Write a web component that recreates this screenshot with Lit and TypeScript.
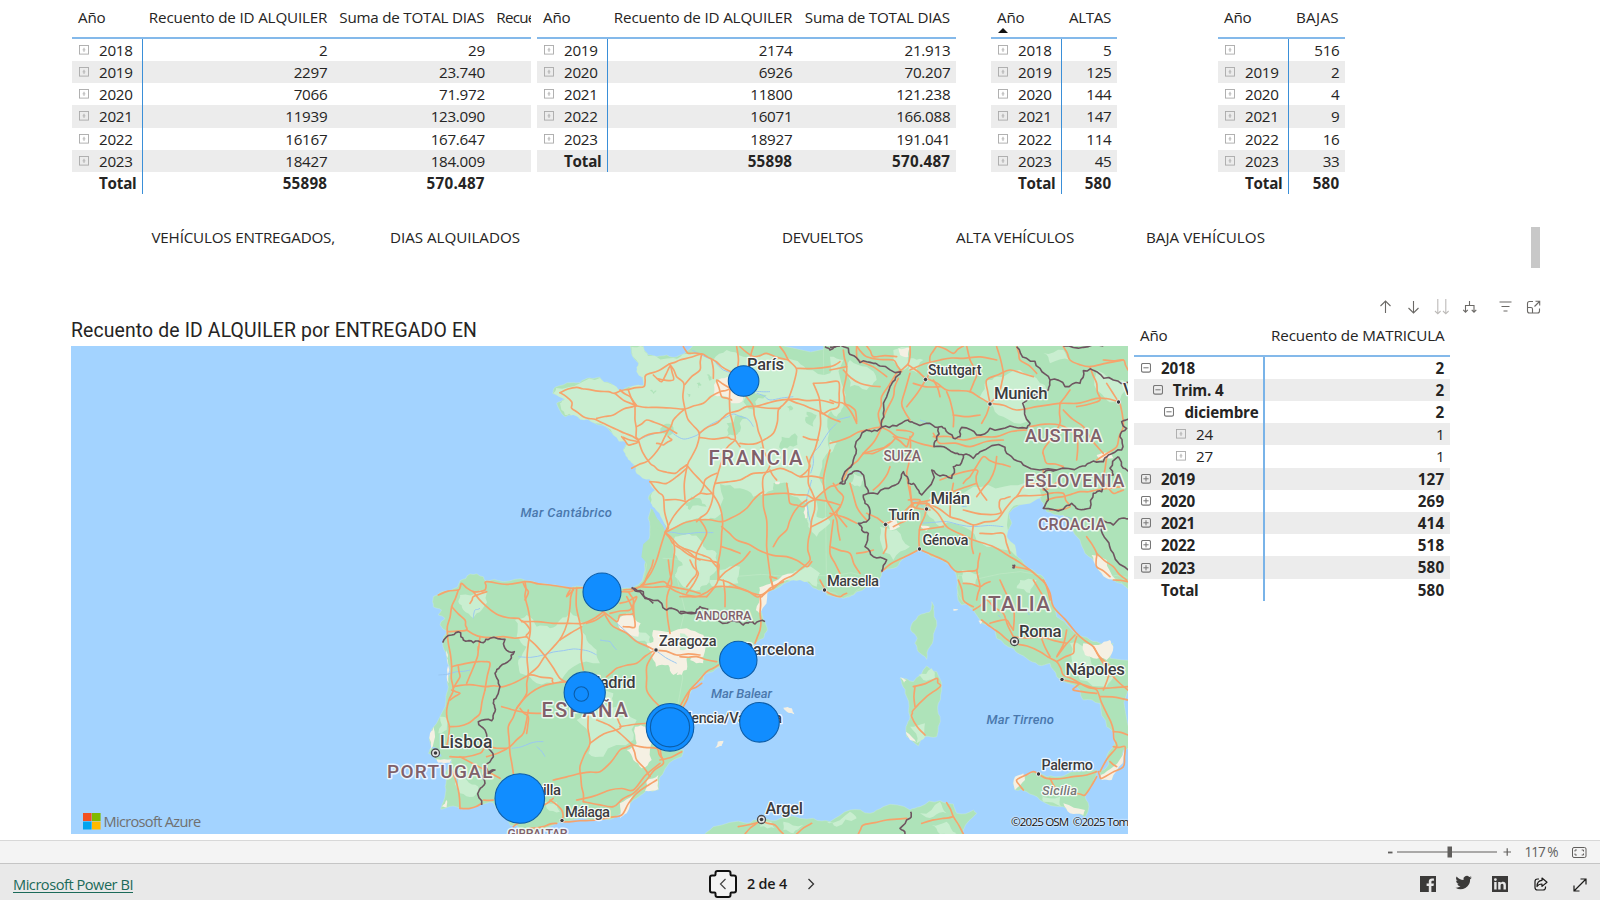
import { LitElement, html, svg, css } from "lit";
import { customElement, property } from "lit/decorators.js";

/* ---------- text set to a given width ---------- */
@customElement("fit-text")
class FitText extends LitElement {
  static styles = css`
    :host { display: inline-block; white-space: nowrap; }
  `;
  @property({ type: Number }) w = 0;
  firstUpdated() {
    const n = (this.textContent || "").trim().length;
    const natural = this.getBoundingClientRect().width;
    if (this.w && n > 1) this.style.letterSpacing = (this.w - natural) / n + "px";
  }
  render() {
    return html`<slot></slot>`;
  }
}

/* ---------- matrix visual ---------- */
interface Row { label: string; vals: string[]; bold?: boolean; level?: number; icon?: string; }
interface Col { title: string; w: number; tw?: number; }

@customElement("matrix-table")
class MatrixTable extends LitElement {
  static styles = css`
    :host { display: block; font: 15.2px/22px "Open Sans", "Noto Sans", sans-serif; color: #252423; overflow: hidden; }
    .row { display: grid; height: 22.15px; }
    .soft .row { height: 22.22px; }
    .row.alt { background: #ececec; }
    .head { height: 31px; padding-top: 6px; border-bottom: 2px solid #84b9ea; }
    .head > div { padding: 0 6px; text-align: right; white-space: nowrap; }
    .head > .first { text-align: left; position: relative; }
    .head > .cut { text-align: left; padding-right: 0; overflow: hidden; }
    .tri { position: absolute; left: 6.500px; top: 22px; width: 0; height: 0; border: 5px solid transparent; border-top: 0; border-bottom-color: #111; }
    .cell { text-align: right; padding-right: 5.5px; letter-spacing: -0.28px; }
    .name { display: flex; align-items: center; padding-left: 7px; letter-spacing: -0.28px; border-right: 1.5px solid #3a8fd8; gap: 10px; white-space: nowrap; }
    .soft .name { border-right: 2px solid #79b3e8; }
    .bold { font-weight: 700; }
    .bold .cell { letter-spacing: 0.25px; }
    .bold .name { letter-spacing: -0.22px; }
    svg { flex: none; width: 10px; height: 10px; }
  `;
  @property({ attribute: false }) cols: Col[] = [];
  @property({ attribute: false }) rows: Row[] = [];
  @property({ type: Boolean }) sorted = false;
  @property({ type: Boolean }) soft = false;

  icon(kind: string | undefined, bold?: boolean) {
    const c = bold ? "#777" : "#a9a9a9";
    return html`<svg viewBox="0 0 10 10" fill="none" stroke=${c}>
      ${kind === "none" ? "" : svg`<rect x=".5" y=".5" width="9" height="8.6" rx=${bold ? 1.5 : 0} stroke-width=${bold ? 1.1 : 0.9} />
      ${kind === "minus" || bold ? svg`<path d="M2.4 4.8H7.6" />` : svg`<path d="M3.4 4.8H6.6" stroke-opacity=".5" />`}
      ${kind === "minus" ? "" : svg`<path d=${bold ? "M5 2.2V7.4" : "M5 2.8V6.8"} />`}`}
    </svg>`;
  }

  render() {
    const g = "grid-template-columns:" + this.cols.map((c) => c.w + "px").join(" ");
    return html`
      <div class="row head" style=${g}>
        ${this.cols.map((c, i) => html`<div class=${i === 0 ? "first" : i === 3 ? "cut" : ""}><fit-text .w=${c.tw || 0}>${c.title}</fit-text>${i === 0 && this.sorted ? html`<span class="tri"></span>` : ""}</div>`)}
      </div>
      <div class=${this.soft ? "soft" : ""}>
        ${this.rows.map((r, i) => html`
          <div class="row ${i % 2 ? "alt" : ""} ${r.bold ? "bold" : ""}" style=${g}>
            <div class="name" style=${"padding-left:" + (7 + (r.level || 0) * 11.7) + "px"}>${this.icon(r.icon, r.bold)}<span>${r.label}</span></div>
            ${r.vals.map((v) => html`<div class="cell">${v}</div>`)}
          </div>`)}
      </div>`;
  }
}

const plain = (data: string[][]): Row[] =>
  data.map(([label, ...vals]) => (label === "Total" ? { label, vals, bold: true, icon: "none" } : { label, vals }));

const AN = { title: "Año", w: 70.8, tw: 27.5 };
const RID = { title: "Recuento de ID ALQUILER", w: 190, tw: 178.5 };
const STD = { title: "Suma de TOTAL DIAS", w: 157.5, tw: 145 };

const T1 = plain([["2018", "2", "29"], ["2019", "2297", "23.740"], ["2020", "7066", "71.972"], ["2021", "11939", "123.090"], ["2022", "16167", "167.647"], ["2023", "18427", "184.009"], ["Total", "55898", "570.487"]]);
const T2 = plain([["2019", "2174", "21.913"], ["2020", "6926", "70.207"], ["2021", "11800", "121.238"], ["2022", "16071", "166.088"], ["2023", "18927", "191.041"], ["Total", "55898", "570.487"]]);
const T3 = plain([["2018", "5"], ["2019", "125"], ["2020", "144"], ["2021", "147"], ["2022", "114"], ["2023", "45"], ["Total", "580"]]);
const T4 = plain([["", "516"], ["2019", "2"], ["2020", "4"], ["2021", "9"], ["2022", "16"], ["2023", "33"], ["Total", "580"]]);
const T5: Row[] = [
  { label: "2018", vals: ["2"], bold: true, icon: "minus" },
  { label: "Trim. 4", vals: ["2"], bold: true, icon: "minus", level: 1 },
  { label: "diciembre", vals: ["2"], bold: true, icon: "minus", level: 2 },
  { label: "24", vals: ["1"], level: 3 },
  { label: "27", vals: ["1"], level: 3 },
  { label: "2019", vals: ["127"], bold: true },
  { label: "2020", vals: ["269"], bold: true },
  { label: "2021", vals: ["414"], bold: true },
  { label: "2022", vals: ["518"], bold: true },
  { label: "2023", vals: ["580"], bold: true },
  { label: "Total", vals: ["580"], bold: true, icon: "none" },
];

/* ---------- map geometry ---------- */
type P = [number, number];
const pts = (s: string): P[] => s.trim().split(/\s+/).map((p) => p.split(",").map(Number) as P);

const noise = (x: number, y: number, k: number) => {
  const v = Math.sin(x * 12.9898 + y * 78.233 + k * 37.7) * 43758.5453;
  return (v - Math.floor(v)) * 2 - 1;
};
// midpoint displacement gives coasts and borders their ragged line
const rough = (p: P[], amp: number, depth: number): P[] => {
  if (!depth) return p;
  const out: P[] = [p[0]];
  for (let i = 1; i < p.length; i++) {
    const [a, b] = [p[i - 1], p[i]];
    const dx = b[0] - a[0], dy = b[1] - a[1];
    const len = Math.hypot(dx, dy);
    const n = len < 6 || len > 320 ? 0 : noise(a[0], b[1], depth) * amp;
    out.push([(a[0] + b[0]) / 2 - dy * n, (a[1] + b[1]) / 2 + dx * n], b);
  }
  return rough(out, amp, depth - 1);
};
const line = (p: P[]) => "M" + p.map((q) => q[0].toFixed(1) + " " + q[1].toFixed(1)).join("L");
const shape = (s: string, amp = 0.13) => { const p = pts(s); return line(rough([...p, p[0]], amp, 2)) + "Z"; };
const border = (s: string) => line(rough(pts(s), 0.2, 2));
const curve = (s: string) => {
  const p = rough(pts(s), 0.07, 1);
  let d = `M${p[0][0]} ${p[0][1]}`;
  for (let i = 0; i < p.length - 1; i++) {
    const a = p[i - 1] || p[i], b = p[i], c = p[i + 1], e = p[i + 2] || c;
    d += `C${b[0] + (c[0] - a[0]) / 6} ${b[1] + (c[1] - a[1]) / 6} ${c[0] - (e[0] - b[0]) / 6} ${c[1] - (e[1] - b[1]) / 6} ${c[0]} ${c[1]}`;
  }
  return d;
};

interface Tile { x: number; y: number; land: string[]; sea?: string[]; light: string[]; dark?: string[]; cream: string[]; rivers: string[]; roads: string[]; borders: string[]; }

const TILES: Tile[] = [
  {
    // France
    x: 540, y: 340,
    land: [
      "272,10 310,10 312,30 324,45 360,48 400,52 435,40 460,10 930,10 930,700 895,762 850,748 820,744 800,724 770,714 740,727 700,744 680,762 660,780 660,830 200,830 240,752 300,736 308,720 318,660 326,610 330,560 332,510 325,475 345,450 330,418 290,400 280,372 262,352 250,330 260,310 250,292 220,285 200,262 165,250 120,238 105,215 95,225 75,230 50,190 75,178 62,165 38,160 45,142 95,128 120,128 150,114 180,112 190,128 212,130 228,150 245,152 265,140 300,140 312,135 290,95 296,70 274,40",
    ],
    sea: ["328,478 338,500 358,520 376,558 384,574 378,574 362,550 344,520 330,502"],
    light: [
      "274,20 310,20 324,48 400,54 440,42 520,60 560,30 610,50 700,50 760,60 800,90 870,100 880,190 862,260 870,330 840,400 850,450 825,475 830,540 800,540 800,490 745,460 745,430 700,430 700,450 640,470 600,445 540,432 545,520 500,540 460,540 385,575 376,555 345,510 332,490 345,450 330,418 290,400 280,372 262,352 250,330 262,310 220,285 165,250 120,238 100,225 75,225 60,190 75,178 40,160 48,144 120,130 180,114 212,132 245,152 312,138 290,95 296,70",
      "405,590 445,580 485,605 500,630 530,640 530,690 500,735 450,742 405,705 430,680 400,640",
      "810,530 860,530 870,550 830,590 805,560",
      "540,690 600,680 595,730 550,745",
      "740,720 800,680 840,700 830,740 780,720",
    ],
    dark: [
      "560,250 620,235 600,275 560,290", "800,215 830,225 820,260 795,240", "725,290 765,280 760,320 725,330", "640,150 680,165 650,200 610,185", "435,490 480,475 500,500 450,510",
      "370,255 400,262 380,290 362,280", "330,150 350,152 340,162", "500,105 515,110 508,122", "600,90 625,98 610,110", "660,320 690,330 670,345", "570,260 600,256 590,285 572,280",
      "440,160 452,165 444,172", "470,130 485,135 475,145", "740,200 760,205 748,215", "330,545 370,560 360,640 330,680",
    ],
    cream: ["522,135 545,115 575,110 570,135 610,165 605,185 575,190 560,170 522,165", "658,742 700,725 760,700 745,718 690,750 660,775", "705,425 720,425 718,432 706,432", "795,500 802,500 802,535 795,535"],
    rivers: ["295,300 330,285 385,270 430,297 480,280 540,240 580,222 620,235 640,260", "455,30 485,45 520,60 550,90 600,100 640,150 690,155", "375,575 430,582 520,578", "890,250 850,300 820,340 812,400", "815,560 800,480 815,420", "650,160 690,180 760,170"],
    roads: [
      "60,158 110,142 145,148 205,155 225,160 265,148 312,140 318,105 388,72 420,60 485,42 510,55 545,80 590,100",
      "60,158 95,185 95,205 130,230 165,238 215,262 255,280 295,300", "225,160 285,197 220,225 170,235", "285,197 285,240 288,290 295,300 330,370 355,390 405,400 440,375",
      "285,197 350,202 435,207 490,190 540,155 575,145", "435,207 400,240 385,270 340,280 295,300", "435,207 445,240 478,280 455,350 440,385 435,480",
      "478,280 530,250 565,220 620,200 680,190 745,178 800,182 880,190", "388,72 410,110 432,133 435,207", "485,42 480,90 435,133", "285,197 265,150",
      "478,292 560,292 585,300 600,320", "570,220 580,260 585,300 550,340 540,380 525,430 520,465", "440,375 480,420 520,465 545,520 545,580 540,640 535,718 500,770",
      "275,385 320,365 360,320 385,270", "330,425 380,430 440,385", "330,425 345,445 370,470 385,560 375,578", "375,578 440,485 480,460 520,460",
      "375,578 430,550 470,540 545,545 600,520 640,480 670,455", "375,578 400,600 430,625 470,655 535,670 535,718", "375,578 400,612 440,640 480,660", "375,578 350,660 310,730 300,740 250,750",
      "535,718 580,680 630,635", "545,560 590,600 660,632 740,650 800,680 815,665", "525,430 600,420 640,400 720,385 780,410 850,415",
      "670,455 680,540 680,620 690,700 700,745", "670,465 740,460 800,465 825,478", "825,478 815,540 805,600 810,660 760,705 700,745 665,770",
      "745,178 715,210 700,280 650,310 600,310", "745,178 770,90 745,60 720,20", "745,178 790,195 840,215 900,245", "840,215 835,290 810,360 805,430 825,478",
      "825,478 900,495", "825,478 870,440 900,430", "820,130 895,125 895,200 845,220 820,130", "770,85 870,80 900,65", "610,160 640,200 650,250 665,300 690,370 670,410 670,455",
      "535,718 590,740 650,770 665,770", "740,430 750,490 790,500 825,478", "300,740 380,740 440,765 500,770", "400,600 400,660 380,740", "375,480 440,485",
      "745,60 680,40 640,50 600,20", "485,42 445,40 430,20", "515,60 520,115", "340,105 365,125 390,80 400,120 350,115", "245,290 265,315 295,305 250,292", "700,620 740,570 760,520 800,480",
      "570,145 570,220", "570,145 530,120 545,170 575,180", "590,100 590,20", "640,20 630,60 620,110", "290,260 320,240 365,255 410,280", "240,150 270,170 290,197", "780,410 810,380 800,350",
      "480,540 500,580 470,640 470,700 440,740", "545,620 600,640", "870,330 850,420 860,480 890,540 900,600", "815,560 870,530 900,500", "880,540 870,640 900,700", "385,290 395,300 370,315 350,310",
      "790,290 835,300", "690,390 710,420", "700,745 690,710 710,715", "480,460 495,420 530,400", "650,200 720,205", "430,625 470,640 510,655 530,680", "520,465 500,520 470,545",
    ],
    borders: ["275,742 300,755 310,768 340,790", "855,20 870,30 900,18"],
  },
  {
    // Alps, northern Italy and the Adriatic
    x: 830, y: 340,
    land: ["-20,10 960,10 960,745 894,733 850,720 800,680 765,640 750,600 722,560 700,525 665,520 650,515 640,490 632,475 600,475 590,490 560,500 535,520 545,550 530,585 545,620 575,660 620,700 640,740 665,795 395,795 385,730 375,695 350,670 320,655 290,640 270,628 245,640 215,660 190,685 155,695 140,735 80,755 60,770 -10,765"],
    light: [
      "500,110 570,90 630,130 655,150 610,170 580,200 590,245 520,230 480,190 450,170 470,120", "60,60 110,80 140,120 110,150 60,140 45,90", "0,50 40,60 40,200 20,230 0,210",
      "300,470 430,440 520,440 600,410 635,470 560,495 535,520 530,590 560,650 470,620 420,570 330,560 290,520", "800,90 880,120 870,180 830,180 800,150", "190,30 240,20 235,80 210,90", "240,55 280,60 260,100 235,90",
      "70,400 100,410 90,440 60,430", "150,560 200,570 240,620 190,660 150,600", "395,690 450,700 440,740 400,730", "640,40 700,30 720,60 660,70", "0,300 20,310 0,340",
    ],
    cream: ["205,25 240,25 235,50 210,45", "800,345 840,335 850,355 810,362", "170,545 200,540 210,560 180,570", "785,645 830,660 858,720 830,715 800,680", "270,555 300,560 290,572"],
    rivers: ["50,405 75,393 98,400", "705,530 730,540 745,560", "20,240 60,230", "245,480 280,500", "270,550 350,545 430,560 520,560", "270,240 300,255", "395,500 410,500"],
    roads: [
      "40,30 50,80 40,150 45,190 75,210 80,245", "215,95 190,60 110,50 80,18", "240,18 235,70 200,100 155,170 145,220 155,262", "205,115 190,170 150,260",
      "235,75 290,115 300,50 320,18", "240,90 330,60 400,55 500,60", "290,115 350,150 420,155 480,190", "420,155 440,100 410,18", "480,190 510,150 520,100 500,20",
      "480,190 560,210 690,190 800,175 865,185", "480,190 455,250", "480,190 470,120 540,90 610,110", "240,100 215,190 240,240", "350,155 365,200 370,260", "290,115 230,200",
      "370,225 450,225", "155,262 100,340 60,380 40,420", "155,262 200,290 240,300 310,320", "100,340 130,340 180,310", "0,310 60,290 110,270 155,262", "240,290 240,340 230,400 240,460 245,490",
      "310,290 400,300 500,290 590,270", "540,380 500,370 460,350 420,410 400,430", "245,490 330,470 440,430", "290,490 360,530 430,555 500,540 560,470 640,465", "290,490 250,490 170,550 110,520",
      "170,550 170,620 160,640", "290,490 270,560 268,628", "290,490 350,560 430,600 540,650 600,690 645,730 660,780", "268,570 340,560", "430,555 425,600 430,640", "268,628 350,665 380,695 440,690 450,640",
      "155,695 215,655 268,628", "400,510 510,520 510,480 540,470", "650,480 700,470 750,455 800,450 880,440", "690,190 690,250 640,330 650,370 700,380", "870,190 880,260 860,320 800,360",
      "700,20 720,60 780,80 880,60", "640,390 640,450 690,420", "640,465 700,460 720,500 660,510", "60,430 80,500 110,540", "0,620 60,640 90,700", "0,180 40,190 80,250", "80,18 85,60 170,110",
      "40,90 90,130 150,140", "320,18 370,40 400,18", "560,20 570,60 620,100", "250,130 330,140", "200,290 170,320 100,340", "190,290 230,320 250,280 200,270", "310,280 330,310 420,320 520,300", "330,420 440,390 440,430 470,480",
      "700,210 760,260 820,340", "600,260 690,255 740,290 740,360", "370,430 360,530", "450,580 520,580 540,640", "240,440 250,500 300,510", "235,480 270,480 260,500", "770,590 800,640 800,680 840,710", "800,640 850,680 890,720",
      "10,430 40,470 20,520 50,560", "780,80 800,130 810,180 740,200", "820,60 880,60 894,90", "830,350 820,420 850,460 880,450", "440,690 450,740 440,780", "0,520 80,550", "130,630 80,640", "720,150 690,190", "865,185 830,130",
      "0,90 50,80", "110,18 130,50 200,50", "310,120 330,170", "560,470 580,440 640,430", "250,490 230,540 190,560", "550,680 600,690", "180,380 160,420 130,450", "500,350 480,420 440,470",
    ],
    borders: [
      "0,22 55,25 65,45 90,68 130,70 150,78 212,95 195,120 180,140 165,180 160,220 155,262",
      "155,262 125,275 110,270 75,320 70,360 45,395 38,425 30,430 45,430 55,405 75,393 95,400 105,430 115,460 100,465 105,490 120,520 115,540 85,550 95,570 115,580 105,620 130,650 170,660 155,695",
      "155,262 200,258 235,240 250,248 290,250 325,262 320,300 312,320 350,325 375,340 400,345 390,375 370,380 365,415 330,408 305,390 275,465 265,450 250,430 235,430 220,395 205,430 165,445 115,460",
      "325,262 345,265 370,295 390,290 395,262 440,285 480,265 540,258 590,265 600,250 578,190 620,165 655,150 660,120 630,85 590,55 560,20",
      "660,120 705,140 750,130 760,92 800,95 850,120 900,125", "400,345 430,355 450,335 525,322 545,350 580,375 680,390 750,380 780,368 820,365 835,345 875,330 870,290 890,265 875,245 900,240",
      "680,390 640,400 655,480 640,505 700,508 725,490 745,508 780,505 790,460 815,455 810,420 850,405 840,385 865,350", "900,540 875,535 850,555 815,535 815,560 830,600 850,640 900,694", "700,18 760,22 820,18", "865,350 880,385 900,395", "547,676 554,676 552,684 547,682",
    ],
  },
  {
    // Iberia
    x: 370, y: 560,
    land: ["838,-10 822,50 805,75 780,85 740,88 700,90 620,78 600,85 540,75 470,62 400,65 345,62 340,50 300,42 270,62 262,82 215,95 190,110 190,140 215,150 205,165 225,175 210,195 230,215 218,248 230,290 240,330 235,380 228,420 200,490 180,530 185,560 175,580 200,600 245,602 235,625 225,650 228,690 222,720 212,748 250,738 300,745 330,735 370,728 400,765 420,795 445,800 450,830 485,830 510,808 560,790 600,782 680,780 730,775 755,760 790,720 830,690 865,690 870,650 890,620 935,590 940,570 910,560 925,480 940,440 960,400 1000,360 1000,-10"],
    light: [
      "270,105 330,90 350,100 335,150 310,175 280,150 265,125", "435,180 470,165 500,200 540,205 570,180 600,155 640,190 650,240 680,270 690,310 610,320 560,370 500,370 450,340 445,300 470,260 440,230",
      "620,480 740,440 740,470 800,480 790,540 700,590 655,580 660,540", "255,640 290,660 325,680 310,710 270,700", "520,725 560,725 570,755 530,745", "925,20 990,0 990,90 940,80 915,50", "690,395 730,400 730,430 700,430", "780,210 840,230 850,265 790,240", "210,470 235,480 230,510 205,520",
    ],
    cream: [
      "740,180 780,160 812,190 805,230 760,215", "850,210 950,205 1000,225 1000,290 950,290 950,330 910,345 895,315 858,320 845,275 830,250 850,245", "795,500 830,500 850,540 845,600 815,625 790,600 770,570 800,550", "830,660 865,645 865,688 825,692",
      "750,730 790,705 770,760 750,775", "200,598 245,598 240,608 205,608", "228,270 238,330 236,370 231,330", "180,520 190,500 188,560 180,575", "215,740 230,720 230,742",
    ],
    sea: ["185,562 205,568 215,590 200,588"],
    rivers: ["445,290 520,285 580,272 640,270 680,285", "425,565 480,550 520,545", "690,240 720,245 740,270", "740,190 790,235 855,270 920,310", "310,175 315,150 330,145", "240,620 260,650 262,690", "205,345 260,335 300,330", "500,560 525,590"],
    roads: [
      "205,105 265,90 275,70 310,95 345,90 350,65 470,65 540,75 610,85 700,90 780,95 820,75 835,40 850,0", "265,90 245,140 232,200 235,250 245,320 250,390 230,450 238,500 230,560",
      "310,95 350,140 385,165 445,175 460,185 480,210 470,230 525,288 570,355 620,380", "245,140 285,180 290,210 235,215", "290,210 330,230 400,230 470,230", "325,260 315,310 290,370", "245,320 325,305 360,310 345,390",
      "250,380 345,380 400,380 480,345 545,355 550,370", "345,390 330,460 295,490 238,500", "465,65 465,110 480,180 475,250 475,340 470,400 440,445 415,500 420,580 430,640", "610,85 600,140 575,230 525,288 475,345",
      "455,185 550,190 640,190 700,155", "620,85 630,190 635,260 640,330", "700,155 740,185 750,165 790,160 770,110", "635,200 570,240", "640,370 550,370 480,400 440,445", "395,440 430,450 520,460", "475,450 460,520 420,560 350,590",
      "700,155 730,200 800,245 855,270 920,285 990,285", "855,270 800,310 740,325 710,350", "855,275 830,320 830,390 870,440", "240,590 330,580 350,560 410,565", "655,460 660,550 630,620 635,680 640,725", "680,480 750,520 790,555 860,565 880,600",
      "750,500 830,490", "660,550 750,505 740,470", "630,640 690,635 750,570 785,555", "550,660 630,640", "785,555 800,600 840,650", "870,600 935,575", "870,560 880,610 830,660 790,700 730,740 640,725", "340,720 370,720",
      "270,745 265,690 240,620", "270,745 300,745 335,730", "540,720 575,750 580,785 680,780 755,765 800,700 860,660", "620,720 720,690 790,690 870,610", "430,800 445,790", "270,590 390,655", "895,0 905,70 890,120 900,220",
      "820,75 880,65 905,80 990,100", "995,370 960,390 940,440", "350,95 310,110 300,130", "460,70 475,95 465,120", "775,95 790,120 795,200 760,200", "720,160 780,150 800,110 750,130", "450,445 475,470 470,520", "510,740 550,715", "240,420 270,400 245,390",
      "610,90 590,110 600,90", "250,385 270,350 265,320", "560,790 520,800 480,805", "960,0 985,40 950,100", "330,230 325,270", "650,190 700,165",
    ],
    borders: [
      "785,85 820,95 825,115 875,130 890,150 920,150 940,160 990,155", "218,248 245,225 272,218 280,240 310,248 340,248 360,235 405,238 405,265 433,275 420,300 390,320 375,340 385,370 380,410 370,430 375,455 365,482 325,485 345,510 350,560 370,590 345,620 355,640 375,630 360,640 345,640 345,670 328,690 335,735",
    ],
  },
  {
    // western Mediterranean
    x: 680, y: 580,
    land: [
      "-10,-10 330,-10 262,35 245,65 240,90 255,125 262,150 250,175 215,200 175,235 115,262 80,280 45,310 20,350 -10,395", "370,-10 420,12 440,30 490,55 520,45 550,20 560,-10",
      "755,65 762,95 765,150 750,200 740,238 715,215 705,190 712,175 692,150 700,125 735,100 750,95", "660,295 700,305 740,258 770,275 785,320 775,370 780,410 770,470 735,470 715,498 680,470 678,440 690,410 680,350 665,310",
      "835,-15 845,60 880,90 905,130 945,145 950,175 1000,205 1040,235 1075,255 1110,250 1130,290 1200,330 1210,360 1260,370 1280,440 1305,460 1300,500 1280,530 1285,555 1260,575 1265,598 1295,598 1300,570 1330,540 1330,510 1360,490 1360,245 1290,235 1300,190 1250,185 1210,170 1170,145 1130,110 1110,60 1100,20 1083,-15",
      "1000,610 1010,590 1060,575 1100,590 1150,588 1250,570 1240,610 1215,650 1225,690 1215,712 1180,700 1150,680 1080,660 1040,635 1005,630",
      "60,775 100,740 200,730 245,715 280,722 320,710 400,715 450,725 510,690 570,700 610,680 690,690 720,680 780,662 820,672 830,700 880,690 890,700 850,750 845,775", "1290,-10 1360,-10 1360,30 1330,15",
    ],
    light: [
      "90,0 160,0 130,25 100,20", "715,285 755,265 765,295 730,300", "690,440 735,430 735,470 710,490", "1170,190 1210,200 1240,270 1300,290 1280,320 1200,300 1170,260", "1020,0 1070,0 1050,40 1010,25", "1080,640 1140,650 1145,680 1090,665", "720,700 780,665 800,700 760,710",
      "440,725 510,695 530,715 470,740", "310,725 370,735 340,760 310,750", "755,735 800,725 830,760 780,762", "0,160 40,190 0,210", "250,720 275,725 285,745 240,740",
    ],
    cream: [
      "40,225 70,235 70,250 30,240", "-10,245 20,262 5,285 -10,285", "1210,190 1255,195 1290,180 1300,200 1280,240 1240,235 1215,225", "310,383 335,385 343,403 325,398", "113,485 130,482 125,498 105,505", "660,292 680,300 672,308", "678,455 710,490 690,480",
      "1262,585 1300,560 1332,510 1328,550 1295,600 1265,600", "1005,590 1030,580 1035,600 1005,630", "235,45 262,35 240,100 228,90", "820,86 835,88 820,92", "1150,670 1215,690 1210,705 1170,700", "895,122 912,125 900,132",
    ],
    rivers: ["955,105 962,112", "1040,95 1048,105"],
    roads: [
      "0,230 50,230 110,245", "0,380 30,330 80,275 115,255", "0,50 50,50 110,20 240,45 310,5", "240,45 240,100 240,150 225,190", "130,0 135,80", "700,320 770,295 780,320 700,390 695,410 735,465", "705,320 705,380",
      "835,0 850,60 880,80", "905,120 960,160 1000,190 1080,215 1130,245 1150,285 1200,310 1250,330 1280,400 1300,450 1310,500 1260,575", "1090,0 1120,80 1190,160 1240,200 1270,250 1300,290 1344,330", "1000,170 970,100 920,60 880,90",
      "1000,170 1080,170 1160,190", "1080,160 1110,230", "1160,150 1130,230 1185,165", "1150,300 1250,325 1344,320", "1240,200 1290,260 1270,330", "1260,350 1344,360", "1300,455 1344,465", "1250,575 1180,590 1100,595 1060,575 1010,600 1030,630", "1250,590 1215,645 1190,640",
      "1110,595 1130,630", "1290,545 1310,560", "1300,500 1335,500 1330,560 1265,595 1255,575", "175,740 245,725 285,735 310,762", "230,730 195,762", "350,762 395,730", "535,762 550,735 620,720 680,715", "800,668 820,710 850,762", "725,730 790,715 820,710",
      "960,0 1000,80 1000,150", "850,10 900,20 930,5", "930,130 980,120 1000,150", "1130,245 1180,220 1190,170", "1200,310 1180,330 1250,340", "1060,0 1090,50", "420,0 440,35 480,50 500,40", "1300,0 1344,5",
    ],
    borders: ["0,95 45,100 60,80 85,88", "115,122 170,125 190,135 210,125 225,132 255,125", "692,695 690,715 660,745 675,762"],
  },
];

interface Label { t: string; x: number; y: number; w: number; s: number; k?: string; }
const LABELS: Label[] = [
  { t: "París", x: 747, y: 370.2, w: 37, s: 16.5 }, { t: "FRANCIA", x: 708.5, y: 465, w: 94, s: 20.3, k: "land" }, { t: "Mar Cantábrico", x: 520.5, y: 517.3, w: 91.5, s: 13, k: "seaname" },
  { t: "Stuttgart", x: 928, y: 375.3, w: 53.5, s: 14.4 }, { t: "Munich", x: 994, y: 399, w: 53.5, s: 16.8 }, { t: "AUSTRIA", x: 1025, y: 442, w: 77, s: 18.3, k: "land" }, { t: "SUIZA", x: 883.5, y: 461.3, w: 37.5, s: 14, k: "land" },
  { t: "ESLOVENIA", x: 1024.5, y: 486.6, w: 100, s: 18, k: "land" }, { t: "Milán", x: 930.5, y: 503.5, w: 39.5, s: 16.8 }, { t: "Turín", x: 888.5, y: 520, w: 31, s: 14.6 }, { t: "Génova", x: 922.5, y: 545, w: 46, s: 14.8 },
  { t: "CROACIA", x: 1038, y: 530, w: 68, s: 16.3, k: "land" }, { t: "Marsella", x: 827, y: 585.8, w: 52, s: 14.8 }, { t: "V", x: 1123, y: 394.5, w: 11, s: 16.5 }, { t: "ITALIA", x: 981, y: 611, w: 69, s: 20.8, k: "land" },
  { t: "Roma", x: 1019, y: 636.5, w: 42.5, s: 16.8 }, { t: "Nápoles", x: 1065.5, y: 674.5, w: 59.5, s: 16.8 }, { t: "Palermo", x: 1041.5, y: 770, w: 51.5, s: 14.5 }, { t: "Sicilia", x: 1042, y: 794.500, w: 35, s: 13, k: "isle" },
  { t: "Mar Tirreno", x: 986.5, y: 723.8, w: 67.5, s: 13, k: "seaname" }, { t: "Mar Balear", x: 711, y: 698, w: 61, s: 13, k: "seaname" }, { t: "Argel", x: 765.5, y: 813.8, w: 37.5, s: 16.5 }, { t: "ANDORRA", x: 695.5, y: 620, w: 56, s: 12.8, k: "land" },
  { t: "Zaragoza", x: 659, y: 646.3, w: 57.5, s: 14.5 }, { t: "Barcelona", x: 743, y: 654.5, w: 71.5, s: 16.3 }, { t: "Madrid", x: 586, y: 688, w: 49.5, s: 16.5 }, { t: "Valencia/València", x: 672, y: 722.5, w: 110, s: 14.8 }, { t: "ESPAÑA", x: 541.5, y: 717, w: 86.5, s: 20.3, k: "land" },
  { t: "Lisboa", x: 440, y: 747.8, w: 52.5, s: 17.5 }, { t: "PORTUGAL", x: 387, y: 777.8, w: 105.5, s: 19, k: "land" }, { t: "Sevilla", x: 520, y: 794.5, w: 41, s: 14.8 }, { t: "Málaga", x: 565, y: 817, w: 45, s: 14.8 }, { t: "GIBRALTAR", x: 507.5, y: 837.5, w: 60, s: 12.4, k: "land" },
];
const DOTS: P[] = [[925.5, 379.5], [990, 404], [1118.5, 402], [926.5, 509], [885.5, 524.5], [919.5, 549], [824.5, 590], [656, 650], [1062, 679.5], [1038.5, 774], [562, 820.5]];
const CAPITALS: P[] = [[435.5, 753], [1014.5, 641.5], [761.5, 819.5]];
const BUBBLES: [number, number, number][] = [[743.6, 381, 15.3], [602, 592, 19], [738.3, 660, 18.7], [584.7, 692.5, 20.6], [581.3, 694, 7.2], [759.5, 722.3, 19.8], [670, 727.3, 23.8], [670, 727.3, 19.6], [519.8, 798.5, 24.8]];

@customElement("map-view")
class MapView extends LitElement {
  static styles = css`
    :host { display: block; position: relative; overflow: hidden; background: #a3d3ff; }
    .geo { display: block; width: 100%; height: 100%; }
    .land { fill: #aee3b9; stroke: #d5efd6; stroke-width: 1; }
    .light { fill: #c9eed0; }
    .dark { fill: #aee3b9; }
    .sea { fill: #a3d3ff; }
    .cream { fill: #f5f0e3; }
    .river { fill: none; stroke: #9ac7f2; stroke-width: 3; }
    .road { fill: none; stroke: #f6a36c; stroke-width: 5; stroke-linecap: round; stroke-linejoin: round; }
    .border { fill: none; stroke: #6e5560; stroke-width: 4.8; stroke-linejoin: round; }
    text { font-family: Roboto, sans-serif; paint-order: stroke; stroke: #fff; stroke-width: 2.6px; stroke-linejoin: round; stroke-opacity: .85; }
    .name { font-weight: 500; fill: #3c3c40; }
    .land-t { fill: #80606a; stroke-opacity: .75; font-weight: 500; stroke-width: 3px; }
    .seaname { fill: #4a78ad; font-style: italic; stroke: none; font-weight: 500; }
    .isle { fill: #777; font-style: italic; font-weight: 500; }
    .azure { position: absolute; left: 11.5px; bottom: 3px; display: flex; align-items: center; gap: 3px; color: #707070; font: 500 14.6px/20px "Open Sans", sans-serif; }
    .azure svg { width: 18px; height: 17px; margin-top: 1.5px; }
    .copy { position: absolute; left: 940px; bottom: 4.5px; font: 11.6px/16px "Open Sans", sans-serif; color: #111; text-shadow: 0 0 2px #fff, 0 0 2px #fff; }
    .copy fit-text { white-space: pre; }
  `;
  render() {
    const all = (fn: (t: Tile) => unknown) => TILES.map((t) => svg`<g transform="translate(${t.x} ${t.y}) scale(.33333)">${fn(t)}</g>`);
    const p = (list: string[] | undefined, cls: string, f: (s: string) => string) => (list || []).map((s) => svg`<path class=${cls} d=${f(s)} />`);
    return html`
      <svg class="geo" viewBox="71 346 1057 488" preserveAspectRatio="none">
        ${all((t) => p(t.land, "land", (s) => shape(s)))}
        ${all((t) => [p(t.light, "light", (s) => shape(s, 0.18)), p(t.dark, "dark", (s) => shape(s, 0.35)), p(t.cream, "cream", (s) => shape(s)), p(t.sea, "sea", (s) => shape(s))])}
        ${all((t) => p(t.rivers, "river", curve))}
        ${all((t) => p(t.roads, "road", curve))}
        ${all((t) => p(t.borders, "border", border))}
        ${DOTS.map(([x, y]) => svg`<circle cx=${x} cy=${y} r="2.2" fill="#3b3b3f" stroke="#fff" stroke-width=".8" />`)}
        ${CAPITALS.map(([x, y]) => svg`<circle cx=${x} cy=${y} r="4" fill="#e8e8e8" stroke="#4a4a4d" stroke-width="1.3" /><circle cx=${x} cy=${y} r="1.8" fill="#3b3b3f" />`)}
        ${LABELS.map((l) => svg`<text class=${l.k === "land" ? "land-t" : l.k || "name"} x=${l.x} y=${l.y} font-size=${l.s} textLength=${l.w}>${l.t}</text>`)}
        ${BUBBLES.map(([x, y, r]) => svg`<circle cx=${x} cy=${y} r=${r} fill="#118dff" stroke="#0c5da8" stroke-width="1.1" />`)}
      </svg>
      <div class="azure">
        <svg viewBox="0 0 18 17"><path fill="#f25022" d="M0 0h8.6v8H0z" /><path fill="#7fba00" d="M9 0h8.6v8H9z" /><path fill="#00a4ef" d="M0 8.5h8.6v8H0z" /><path fill="#ffb900" d="M9 8.5h8.6v8H9z" /></svg>
        <fit-text .w=${97}>Microsoft Azure</fit-text>
      </div>
      <div class="copy"><fit-text .w=${117.5}>©2025 OSM  ©2025 Tom</fit-text></div>`;
  }
}

/* ---------- page ---------- */
@customElement("app-root")
class AppRoot extends LitElement {
  static styles = css`
    :host { display: flex; flex-direction: column; width: 1600px; height: 900px; overflow: hidden; background: #fff; color: #252423; font: 15.2px/22px "Open Sans", "Noto Sans", sans-serif; }
    .report { height: 840px; display: flex; flex-direction: column; }
    .tables { display: flex; height: 226px; padding-left: 72px; }
    .t1 { width: 459px; } .t2 { width: 419px; margin-left: 6px; } .t3 { width: 126px; margin-left: 35px; } .t4 { width: 127px; margin-left: 101px; }
    .captions { display: grid; grid-template-columns: 238.5px 392px 174px 190px 385px auto; justify-items: start; padding-left: 151.5px; height: 62px; }
    .captions fit-text { line-height: 23px; height: 23px; }
    .thumb { width: 9px; height: 41px; background: #c8c8c8; margin-top: 1px; }
    .lower { display: flex; padding-left: 71px; }
    .map { width: 1057px; }
    .title { height: 32.5px; padding-top: 25.5px; font: 19.4px/34px Roboto, sans-serif; color: #252423; }
    map-view { height: 488px; }
    .side { width: 407px; margin-left: 6px; }
    .tools { display: flex; justify-content: flex-end; height: 29.5px; padding-top: 10px; box-sizing: border-box; }
    .tools svg { width: 163px; height: 18px; }
    .t5 { width: 316px; }
    .zoom { height: 22px; border-top: 1px solid #d8d8d8; border-bottom: 1px solid #c5c5c5; background: #f4f4f4; display: flex; align-items: center; justify-content: flex-end; padding-right: 13px; color: #605e5c; }
    .zoom .ctl { width: 124px; height: 14px; margin-right: 13.500px; }
    .zoom .pct { font-size: 13.6px; width: 33px; margin-right: 14.500px; }
    .zoom .pct fit-text { white-space: pre; }
    .zoom .fit { width: 15px; height: 11px; }
    .footer { flex: 1; background: #e9e9e9; display: grid; grid-template-columns: 709px 1fr auto; align-items: center; padding: 3px 13px 0 0; }
    .link { margin-left: 13px; color: #1b6a59; font: 500 14.6px/20px "Open Sans", sans-serif; justify-self: start; }
    .link fit-text { text-decoration: underline; text-underline-offset: 2px; }
    .pager { display: flex; align-items: center; color: #1b1a19; font-weight: 600; font-size: 14.4px; }
    .pager .prev { width: 28px; height: 28px; margin-right: 10px; }
    .pager .next { width: 8px; height: 12px; margin-left: 20px; }
    .social svg { display: block; width: 168px; height: 18px; }
  `;
  render() {
    return html`
      <section class="report">
        <div class="tables">
          <matrix-table class="t1" .cols=${[AN, RID, STD, { title: "Recuento", w: 40.7, tw: 61 }]} .rows=${T1.map((r) => ({ ...r, vals: [...r.vals, ""] }))}></matrix-table>
          <matrix-table class="t2" .cols=${[AN, RID, { ...STD, w: 158 }]} .rows=${T2}></matrix-table>
          <matrix-table class="t3" sorted .cols=${[AN, { title: "ALTAS", w: 55.2, tw: 42 }]} .rows=${T3}></matrix-table>
          <matrix-table class="t4" .cols=${[AN, { title: "BAJAS", w: 56.2, tw: 43 }]} .rows=${T4}></matrix-table>
        </div>
        <div class="captions">
          <fit-text .w=${183.5}>VEHÍCULOS ENTREGADOS,</fit-text>
          <fit-text .w=${130}>DIAS ALQUILADOS</fit-text>
          <fit-text .w=${81}>DEVUELTOS</fit-text>
          <fit-text .w=${118}>ALTA VEHÍCULOS</fit-text>
          <fit-text .w=${119}>BAJA VEHÍCULOS</fit-text>
          <div class="thumb"></div>
        </div>
        <div class="lower">
          <div class="map">
            <div class="title"><fit-text .w=${406}>Recuento de ID ALQUILER por ENTREGADO EN</fit-text></div>
            <map-view></map-view>
          </div>
          <div class="side">
            <div class="tools">
              <svg viewBox="0 0 163 18" fill="none" stroke="#6b6966" stroke-width="1.1">
                <path d="M2.5 8 7.5 3l5 5M7.5 3v12" />
                <path d="M30.5 10l5 5 5-5M35.5 3v12" />
                <path stroke="#bdbbb9" d="M57 13l2.8 2.8 2.8-2.8M59.8 1v14.5M65 13l2.8 2.8 2.8-2.8M67.800 1v14.5" />
                <path d="M91.5 3v4.500M87.5 14V7.500h8.5V14M85.200 11.800l2.300 2.400 2.300-2.400M93.700 11.800l2.300 2.400 2.300-2.400" />
                <path d="M121.500 4h12M123.500 8.500h8M125.500 13h4" />
                <path d="M155 3.500h-3.500q-2 0-2 2V13q0 2 2 2h8q2 0 2-2v-2.500M149.500 9.500h3.500q1.500 0 1.500 1.500v4M156.500 8.500l5-5M157.500 3.200h4.200v4.200" />
              </svg>
            </div>
            <matrix-table class="t5" soft .cols=${[{ title: "Año", w: 131, tw: 27.5 }, { title: "Recuento de MATRICULA", w: 185, tw: 173.5 }]} .rows=${T5}></matrix-table>
          </div>
        </div>
      </section>
      <div class="zoom">
        <svg class="ctl" viewBox="0 0 124 14" stroke="#605e5c" fill="none"><path stroke-width="1.800" d="M1 7.500h4.500" /><path stroke-width="1.200" d="M10 7h100" /><path stroke="none" fill="#605e5c" d="M60.500 1.500h4.500v11h-4.500z" /><path stroke-width="1.200" d="M116.500 7h7.500M120.200 3.300v7.400" /></svg>
        <span class="pct"><fit-text .w=${33}>117 %</fit-text></span>
        <svg class="fit" viewBox="0 0 15 11" fill="none" stroke="#605e5c"><rect x=".5" y=".5" width="13.500" height="10" rx="1.500" /><path d="M3 4.500V3h1.800M9.700 3h1.800v1.500M11.500 6.500V8H9.700M4.800 8H3V6.500" /></svg>
      </div>
      <div class="footer">
        <a class="link"><fit-text .w=${120}>Microsoft Power BI</fit-text></a>
        <div class="pager">
          <svg class="prev" viewBox="0 0 28 28" fill="none"><path fill="#f3f3f3" stroke="#111" stroke-width="2" d="M8.500 1h11q2 0 2 2v1.500q0 1 1 1h2.500q2 0 2 2v13q0 2-2 2H22.500q-1 0-1 1V25q0 2-2 2h-11q-2 0-2-2v-1.500q0-1-1-1H3q-2 0-2-2v-13q0-2 2-2h2.500q1 0 1-1V3q0-2 2-2z" /><path stroke="#444" stroke-width="1.200" d="M16.500 9l-5 5 5 5" /></svg>
          <fit-text .w=${40}>2 de 4</fit-text>
          <svg class="next" viewBox="0 0 8 12" fill="none" stroke="#333" stroke-width="1.300"><path d="M1.500 1l5 5-5 5" /></svg>
        </div>
        <div class="social">
          <svg viewBox="0 0 168 18">
            <path fill="#3b3a39" d="M1 1h16v16h-4.600v-6h2.100l.4-2.500h-2.500V7c0-.8.3-1.200 1.200-1.200h1.300V3.500c-.5-.1-1.200-.1-1.900-.1-2 0-3.200 1.200-3.200 3.200v1.900H7.600V11h2.200v6H1z" />
            <path fill="#3b3a39" transform="translate(36.500 .7) scale(.68)" d="M24 2.600a9.800 9.800 0 0 1-2.800.8A5 5 0 0 0 23.300.7a9.900 9.900 0 0 1-3.100 1.200 4.900 4.900 0 0 0-8.400 4.500A14 14 0 0 1 1.700 1.200a4.900 4.900 0 0 0 1.500 6.600A4.900 4.900 0 0 1 1 7.200a4.900 4.900 0 0 0 3.900 4.900 5 5 0 0 1-2.200.1 4.900 4.900 0 0 0 4.600 3.400A9.900 9.900 0 0 1 0 17.600a14 14 0 0 0 21.500-12.400A10 10 0 0 0 24 2.600z" />
            <path fill="#3b3a39" fill-rule="evenodd" d="M73 1h16v16H73zM75.200 7v7.500h2.400V7zM75 4.600a1.400 1.400 0 1 0 2.800 0 1.400 1.400 0 0 0-2.800 0M79.200 7v7.500h2.400v-4c0-1 .5-1.700 1.500-1.700s1.400.7 1.400 1.700v4h2.400V10c0-2.200-1.200-3.200-2.900-3.200-1.200 0-2 .6-2.400 1.300V7z" />
            <g fill="none" stroke="#1b1a19" stroke-width="1.200"><path d="M120 4h-1.500c-1.400 0-2.500 1-2.500 2.500v6c0 1.400 1 2.500 2.500 2.500h5.500c1.400 0 2.500-1 2.500-2.500v-1" /><path d="M123 3l5 4.200-5 4.200V9c-2.500 0-4 .8-5 2.500 0-3.500 2-6 5-6.200z" stroke-linejoin="round" /></g>
            <g fill="none" stroke="#1b1a19" stroke-width="1.200"><path d="M155.500 15.500l11-11M161.500 4h5.500v5.500M155 10.500V16h5.500" /></g>
          </svg>
        </div>
      </div>`;
  }
}
